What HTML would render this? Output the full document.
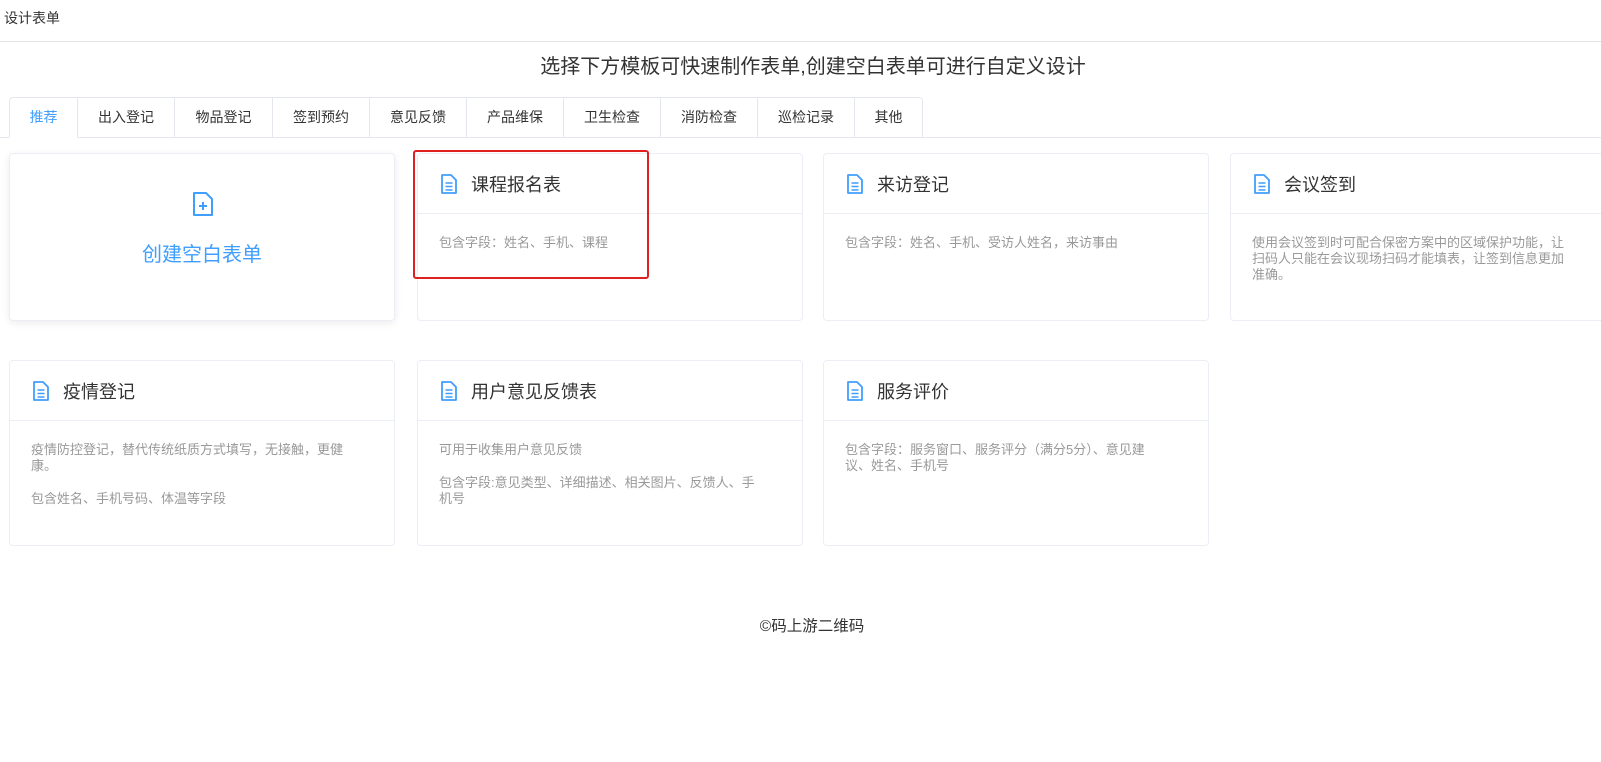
<!DOCTYPE html>
<html><head><meta charset="utf-8"><style>
*{margin:0;padding:0;box-sizing:border-box}
body{width:1601px;height:762px;overflow:hidden;background:#fff;font-family:"Liberation Sans","Noto Sans CJK SC",sans-serif;color:#333;position:relative}
.top{position:absolute;left:0;top:0;width:1601px;height:42px;border-bottom:1px solid #e4e4e4;font-size:14px;padding:8px 0 0 4px}
.title{position:absolute;top:50px;left:0;width:1626px;text-align:center;font-size:20px;color:#333}
.tabline{position:absolute;left:0;top:137px;width:1601px;border-top:1px solid #e4e7ed}
.tab{position:absolute;top:97px;height:41px;border:1px solid #e4e7ed;border-left:none;font-size:14px;text-align:center;line-height:39px;color:#333;background:#fff}
.tab.first{border-left:1px solid #e4e7ed;color:#409eff;border-bottom-color:#fff;border-radius:4px 0 0 0}
.tab.last{border-radius:0 4px 0 0}
.card{position:absolute;width:386px;border:1px solid #ebeef5;border-radius:4px;background:#fff}
.hd{height:60px;border-bottom:1px solid #ebeef5;padding-left:22px;font-size:18px;color:#333;display:flex;align-items:center;gap:13px}
.bd{padding:21px 44px 19px 21px;font-size:13px;color:#999;line-height:16px}
.bd p+p{margin-top:17px}
.red{position:absolute;left:413px;top:150px;width:236px;height:129px;border:2px solid #e02020;border-radius:3px}
.foot{position:absolute;top:614px;left:0;width:1624px;text-align:center;font-size:15.5px;color:#333}
</style></head><body>
<div class="top">设计表单</div>
<div class="title">选择下方模板可快速制作表单,创建空白表单可进行自定义设计</div>
<div class="tabline"></div>
<div class="tab first" style="left:9px;width:69px">推荐</div>
<div class="tab" style="left:78px;width:97px">出入登记</div>
<div class="tab" style="left:175px;width:98px">物品登记</div>
<div class="tab" style="left:273px;width:97px">签到预约</div>
<div class="tab" style="left:370px;width:97px">意见反馈</div>
<div class="tab" style="left:467px;width:97px">产品维保</div>
<div class="tab" style="left:564px;width:97px">卫生检查</div>
<div class="tab" style="left:661px;width:97px">消防检查</div>
<div class="tab" style="left:758px;width:97px">巡检记录</div>
<div class="tab last" style="left:855px;width:68px">其他</div>

<svg width="0" height="0" style="position:absolute"><defs>
<symbol id="doc" viewBox="0 0 18 20"><path d="M2 1h9l5 5v13H2z" fill="none" stroke="#409eff" stroke-width="1.8" stroke-linejoin="round"/><path d="M5.5 9h7M5.5 12.5h7M5.5 16h7" stroke="#409eff" stroke-width="1.6"/></symbol>
</defs></svg>

<div class="card" style="left:9px;top:153px;height:168px;box-shadow:0 2px 8px rgba(0,0,0,.08);text-align:center">
<svg width="24" height="26" viewBox="0 0 24 26" style="position:absolute;left:181px;top:37px"><path d="M3 2h12l6 6v16H3z" fill="none" stroke="#409eff" stroke-width="2" stroke-linejoin="round"/><path d="M8 15h8M12 11v8" stroke="#409eff" stroke-width="2"/></svg>
<div style="position:absolute;top:84px;left:0;width:100%;font-size:20px;color:#409eff">创建空白表单</div>
</div>

<div class="card" style="left:417px;top:153px;height:168px"><div class="hd"><svg width="18" height="20"><use href="#doc"/></svg>课程报名表</div><div class="bd">包含字段：姓名、手机、课程</div></div>
<div class="card" style="left:823px;top:153px;height:168px"><div class="hd"><svg width="18" height="20"><use href="#doc"/></svg>来访登记</div><div class="bd">包含字段：姓名、手机、受访人姓名，来访事由</div></div>
<div class="card" style="left:1230px;top:153px;height:168px;width:386px"><div class="hd"><svg width="18" height="20"><use href="#doc"/></svg>会议签到</div><div class="bd">使用会议签到时可配合保密方案中的区域保护功能，让扫码人只能在会议现场扫码才能填表，让签到信息更加准确。</div></div>

<div class="card" style="left:9px;top:360px;height:186px"><div class="hd"><svg width="18" height="20"><use href="#doc"/></svg>疫情登记</div><div class="bd"><p>疫情防控登记，替代传统纸质方式填写，无接触，更健康。</p><p>包含姓名、手机号码、体温等字段</p></div></div>
<div class="card" style="left:417px;top:360px;height:186px"><div class="hd"><svg width="18" height="20"><use href="#doc"/></svg>用户意见反馈表</div><div class="bd"><p>可用于收集用户意见反馈</p><p>包含字段:意见类型、详细描述、相关图片、反馈人、手机号</p></div></div>
<div class="card" style="left:823px;top:360px;height:186px"><div class="hd"><svg width="18" height="20"><use href="#doc"/></svg>服务评价</div><div class="bd">包含字段：服务窗口、服务评分（满分5分）、意见建议、姓名、手机号</div></div>

<div class="red"></div>
<div class="foot">©码上游二维码</div>
</body></html>
